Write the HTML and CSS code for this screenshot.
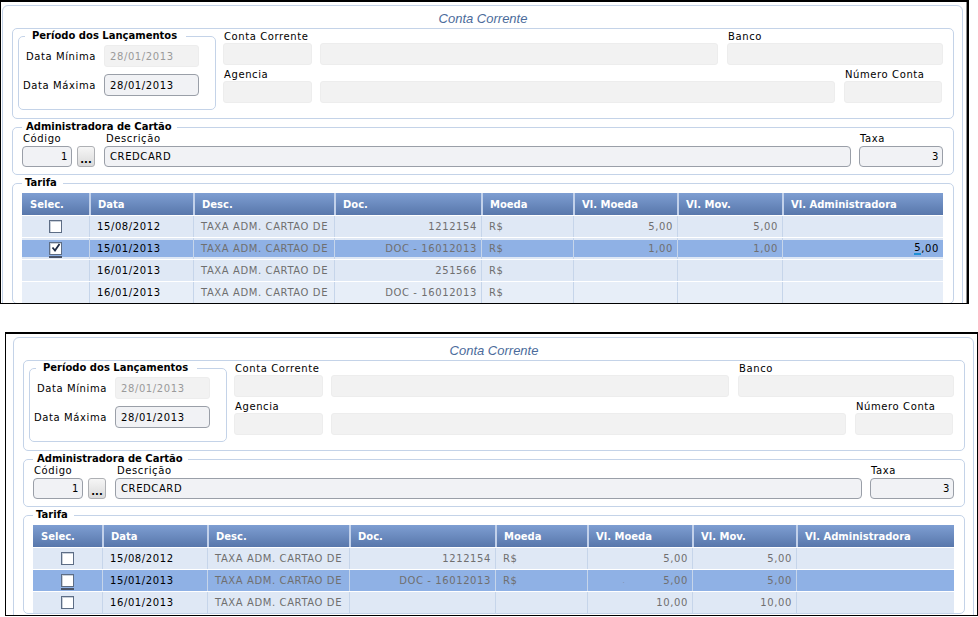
FILE: index.html
```html
<!DOCTYPE html>
<html lang="pt-BR">
<head>
<meta charset="utf-8">
<title>Conta Corrente</title>
<link rel="stylesheet" href="styles.css">
</head>
<body>

<div class="frame frame-a">
  <div class="panel">
    <div class="panel-title">Conta Corrente</div>
    <div class="box-main">
      <fieldset class="group periodo">
        <legend>Período dos Lançamentos</legend>
        <div class="date-row"><span class="date-label">Data Mínima</span><div class="field disabled date">28/01/2013</div></div>
        <div class="date-row"><span class="date-label">Data Máxima</span><div class="field input date">28/01/2013</div></div>
      </fieldset>
      <div class="conta">
        <div class="conta-row">
          <div class="col w89"><div class="lbl">Conta Corrente</div><div class="field disabled"></div></div>
          <div class="col w398"><div class="lbl">&nbsp;</div><div class="field disabled"></div></div>
          <div class="col w216"><div class="lbl">Banco</div><div class="field disabled"></div></div>
        </div>
        <div class="conta-row second">
          <div class="col w89"><div class="lbl">Agencia</div><div class="field disabled"></div></div>
          <div class="col w515"><div class="lbl">&nbsp;</div><div class="field disabled"></div></div>
          <div class="col w99"><div class="lbl">Número Conta</div><div class="field disabled"></div></div>
        </div>
      </div>
    </div>

    <fieldset class="group adm">
      <legend>Administradora de Cartão</legend>
      <div class="adm-row">
        <div class="col w50"><div class="lbl">Código</div><div class="field input num">1</div></div>
        <button class="dots" type="button">...</button>
        <div class="col w747"><div class="lbl">Descrição</div><div class="field input">CREDCARD</div></div>
        <div class="col w84"><div class="lbl">Taxa</div><div class="field input num">3</div></div>
      </div>
    </fieldset>

    <fieldset class="group tarifa">
      <legend>Tarifa</legend>
      <div class="grid">
        <div class="grow head">
          <div class="c">Selec.</div><div class="c">Data</div><div class="c">Desc.</div><div class="c">Doc.</div><div class="c">Moeda</div><div class="c">Vl. Moeda</div><div class="c">Vl. Mov.</div><div class="c">Vl. Administradora</div>
        </div>
        <div class="grow">
          <div class="c center"><span class="cb"></span></div><div class="c">15/08/2012</div><div class="c g">TAXA ADM. CARTAO DE</div><div class="c g r">1212154</div><div class="c g">R$</div><div class="c g r">5,00</div><div class="c g r">5,00</div><div class="c"></div>
        </div>
        <div class="grow sel inset">
          <div class="c center"><span class="cb checked focus"><svg viewBox="0 0 12 12" width="12" height="12"><path d="M2.5 5.5 L5 8.5 L9.5 2" fill="none" stroke="#1d2a44" stroke-width="1.8"/></svg></span></div><div class="c">15/01/2013</div><div class="c g">TAXA ADM. CARTAO DE</div><div class="c g r">DOC - 16012013</div><div class="c g">R$</div><div class="c g r">1,00</div><div class="c g r">1,00</div><div class="c r edit"><span class="caret">5</span>,00</div>
        </div>
        <div class="grow">
          <div class="c"></div><div class="c">16/01/2013</div><div class="c g">TAXA ADM. CARTAO DE</div><div class="c g r">251566</div><div class="c g">R$</div><div class="c"></div><div class="c"></div><div class="c"></div>
        </div>
        <div class="grow light">
          <div class="c"></div><div class="c">16/01/2013</div><div class="c g">TAXA ADM. CARTAO DE</div><div class="c g r">DOC - 16012013</div><div class="c g">R$</div><div class="c"></div><div class="c"></div><div class="c"></div>
        </div>
      </div>
    </fieldset>
  </div>
</div>

<div class="frame frame-b">
  <div class="panel">
    <div class="panel-title">Conta Corrente</div>
    <div class="box-main">
      <fieldset class="group periodo">
        <legend>Período dos Lançamentos</legend>
        <div class="date-row"><span class="date-label">Data Mínima</span><div class="field disabled date">28/01/2013</div></div>
        <div class="date-row"><span class="date-label">Data Máxima</span><div class="field input date">28/01/2013</div></div>
      </fieldset>
      <div class="conta">
        <div class="conta-row">
          <div class="col w89"><div class="lbl">Conta Corrente</div><div class="field disabled"></div></div>
          <div class="col w398"><div class="lbl">&nbsp;</div><div class="field disabled"></div></div>
          <div class="col w216"><div class="lbl">Banco</div><div class="field disabled"></div></div>
        </div>
        <div class="conta-row second">
          <div class="col w89"><div class="lbl">Agencia</div><div class="field disabled"></div></div>
          <div class="col w515"><div class="lbl">&nbsp;</div><div class="field disabled"></div></div>
          <div class="col w99"><div class="lbl">Número Conta</div><div class="field disabled"></div></div>
        </div>
      </div>
    </div>

    <fieldset class="group adm">
      <legend>Administradora de Cartão</legend>
      <div class="adm-row">
        <div class="col w50"><div class="lbl">Código</div><div class="field input num">1</div></div>
        <button class="dots" type="button">...</button>
        <div class="col w747"><div class="lbl">Descrição</div><div class="field input">CREDCARD</div></div>
        <div class="col w84"><div class="lbl">Taxa</div><div class="field input num">3</div></div>
      </div>
    </fieldset>

    <fieldset class="group tarifa">
      <legend>Tarifa</legend>
      <div class="grid">
        <div class="grow head">
          <div class="c">Selec.</div><div class="c">Data</div><div class="c">Desc.</div><div class="c">Doc.</div><div class="c">Moeda</div><div class="c">Vl. Moeda</div><div class="c">Vl. Mov.</div><div class="c">Vl. Administradora</div>
        </div>
        <div class="grow">
          <div class="c center"><span class="cb"></span></div><div class="c">15/08/2012</div><div class="c g">TAXA ADM. CARTAO DE</div><div class="c g r">1212154</div><div class="c g">R$</div><div class="c g r">5,00</div><div class="c g r">5,00</div><div class="c"></div>
        </div>
        <div class="grow sel">
          <div class="c center"><span class="cb focus"></span></div><div class="c">15/01/2013</div><div class="c g">TAXA ADM. CARTAO DE</div><div class="c g r">DOC - 16012013</div><div class="c g">R$</div><div class="c g r"><span class="speck">.</span>5,00</div><div class="c g r">5,00</div><div class="c"></div>
        </div>
        <div class="grow">
          <div class="c center"><span class="cb"></span></div><div class="c">16/01/2013</div><div class="c g">TAXA ADM. CARTAO DE</div><div class="c"></div><div class="c"></div><div class="c g r">10,00</div><div class="c g r">10,00</div><div class="c"></div>
        </div>
      </div>
    </fieldset>
  </div>
</div>

</body>
</html>
```

FILE: styles.css
```css
html, body {
  margin: 0;
  padding: 0;
  background: #ffffff;
}

body {
  font-family: "DejaVu Sans", Verdana, sans-serif;
  font-size: 10px;
  letter-spacing: 0.6px;
  color: #000000;
}

/* ---------- screenshot frames ---------- */
.frame {
  box-sizing: border-box;
  border: 1px solid #000000;
  border-top-width: 2px;
  overflow: hidden;
  background: #ffffff;
}

.frame-a {
  width: 969px;
  height: 304px;
  padding: 3px 0 0 1px;
  border-right-width: 2px;
  box-shadow: inset -1px 0 0 #8c8c8c;
}

.frame-b {
  width: 973px;
  height: 284px;
  margin: 28px 0 0 5px;
  padding: 3px 0 0 7px;
}

/* ---------- main panel ---------- */
.panel {
  box-sizing: border-box;
  width: 961px;
  height: 420px;
  border: 1px solid #c4d3e8;
  border-radius: 6px;
  padding: 0 8px 0 9px;
}

.panel-title {
  height: 22px;
  box-sizing: border-box;
  padding-top: 4px;
  line-height: 18px;
  text-align: center;
  font-family: "Liberation Sans", Arial, sans-serif;
  font-style: italic;
  font-size: 13px;
  letter-spacing: 0;
  color: #4b6b9b;
}

.box-main {
  box-sizing: border-box;
  height: 91px;
  display: flex;
  align-items: flex-start;
  gap: 7px;
  border: 1px solid #c4d3e8;
  border-radius: 5px;
  padding: 1px 10px 0 5px;
}

/* ---------- fieldsets ---------- */
.group {
  margin: 0;
  min-width: 0;
  border: 1px solid #c4d3e8;
  border-radius: 5px;
  box-sizing: border-box;
}

.group legend {
  font-weight: bold;
  font-size: 10px;
  line-height: 12px;
  letter-spacing: 0;
  padding: 0 5px 0 4px;
  color: #000000;
}

.periodo {
  width: 198px;
  flex: none;
  padding: 0 0 13px 0;
}

.periodo legend {
  margin-left: 6px;
  padding: 0 9px 0 7px;
}

.date-row {
  display: flex;
  align-items: center;
  height: 22px;
  margin-top: 3px;
}

.date-row + .date-row {
  margin-top: 7px;
}

.date-label {
  width: 77px;
  text-align: right;
  margin-right: 8px;
  flex: none;
}

.field {
  box-sizing: border-box;
  height: 22px;
  border-radius: 3px;
  display: flex;
  align-items: center;
  padding: 0 5px;
  white-space: nowrap;
}

.field.disabled {
  background: #f2f2f2;
  border: 1px solid #ededed;
  color: #9a9a9a;
}

.field.input {
  background: #f1f2f5;
  border: 1px solid #9a9fa8;
  border-radius: 4px;
  color: #000000;
}

.field.num {
  justify-content: flex-end;
  padding-right: 3px;
}

.field.date {
  width: 95px;
  flex: none;
}

/* ---------- conta corrente fields ---------- */
.conta {
  width: 720px;
  flex: none;
  padding-top: 1px;
}

.conta-row {
  display: flex;
  gap: 8px;
}

.conta-row .col + .col + .col {
  margin-left: 1px;
}

.conta-row.second {
  margin-top: 4px;
}

.col {
  flex: none;
  display: flex;
  flex-direction: column;
}

.lbl {
  line-height: 12px;
  padding-left: 1px;
  white-space: nowrap;
}

.w89 { width: 89px; }
.w398 { width: 398px; }
.w216 { width: 216px; }
.w515 { width: 515px; }
.w99 { width: 98px; }
.w50 { width: 50px; }
.w747 { width: 747px; }
.w84 { width: 84px; }

/* ---------- administradora ---------- */
.adm {
  margin-top: 2px;
  padding: 0 10px 7px 9px;
}

.adm-row {
  display: flex;
  align-items: flex-end;
}

.adm-row .lbl {
  line-height: 11px;
  margin-bottom: 2px;
}

.adm-row .field {
  height: 21px;
}

.adm-row .w747 {
  margin-left: 9px;
}

.adm-row .w747 .lbl {
  padding-left: 2px;
}

.adm-row .w84 {
  margin-left: 8px;
}

.dots {
  box-sizing: border-box;
  width: 18px;
  height: 21px;
  margin: 0 0 0 5px;
  padding: 6px 0 0 0;
  border: 1px solid #aeb0b4;
  border-radius: 3px;
  background: linear-gradient(#f6f6f6, #dadada);
  font-family: "DejaVu Sans", Verdana, sans-serif;
  font-size: 10px;
  font-weight: bold;
  letter-spacing: 0;
  line-height: 10px;
  color: #000000;
}

/* ---------- tarifa table ---------- */
.tarifa {
  margin-top: 2px;
  padding: 4px 10px 0 9px;
}

.tarifa legend {
  padding: 0 6px 0 3px;
}

.grid {
  width: 921px;
}

.grow {
  display: grid;
  grid-template-columns: 67px 104px 141px 147px 92px 104px 105px 161px;
  height: 22px;
  box-sizing: border-box;
  background: #dfe8f5;
  border-top: 1px solid #ffffff;
}

.frame-b .grow {
  grid-template-columns: 69px 105px 142px 146px 92px 105px 104px 158px;
}

.grow.head {
  border-top: 0;
  background: linear-gradient(#7e9ed2, #5877ab);
}

.grow.light {
  background: #e7eef8;
}

.grow.sel {
  background: #8fb1e5;
}

.grow.sel.inset {
  background: linear-gradient(#dfe8f5 0 2px, #8fb1e5 2px 19px, #dfe8f5 19px);
}

.c {
  box-sizing: border-box;
  display: flex;
  align-items: center;
  padding: 0 4px 0 7px;
  white-space: nowrap;
  overflow: hidden;
  border-left: 1px solid #c6d5ea;
}

.c:first-child {
  border-left: 0;
}

.head .c {
  color: #ffffff;
  font-weight: bold;
  letter-spacing: 0;
  border-left: 2px solid #c2d1ea;
  padding-left: 7px;
}

.head .c:first-child {
  border-left: 0;
  padding-left: 8px;
}

.c.g {
  color: #6f6f6f;
}

.c.r {
  justify-content: flex-end;
}

.c.center {
  justify-content: center;
  padding: 0;
}

.c.edit {
  color: #000000;
}

.caret {
  border-bottom: 2px solid #1e90d6;
}

.speck {
  color: #7f8fa8;
  margin-right: 38px;
  font-size: 7px;
}

.cb {
  position: relative;
  box-sizing: border-box;
  display: block;
  width: 13px;
  height: 13px;
  background: #ffffff;
  border: 1px solid #5d6d85;
  box-shadow: inset 1px 1px 0 #c9d0da;
}

.cb svg {
  display: block;
  margin: -1px 0 0 0;
}

.cb.focus::after {
  content: "";
  position: absolute;
  left: -1px;
  right: -1px;
  bottom: -4px;
  height: 2px;
  background: #4a5468;
}
```
